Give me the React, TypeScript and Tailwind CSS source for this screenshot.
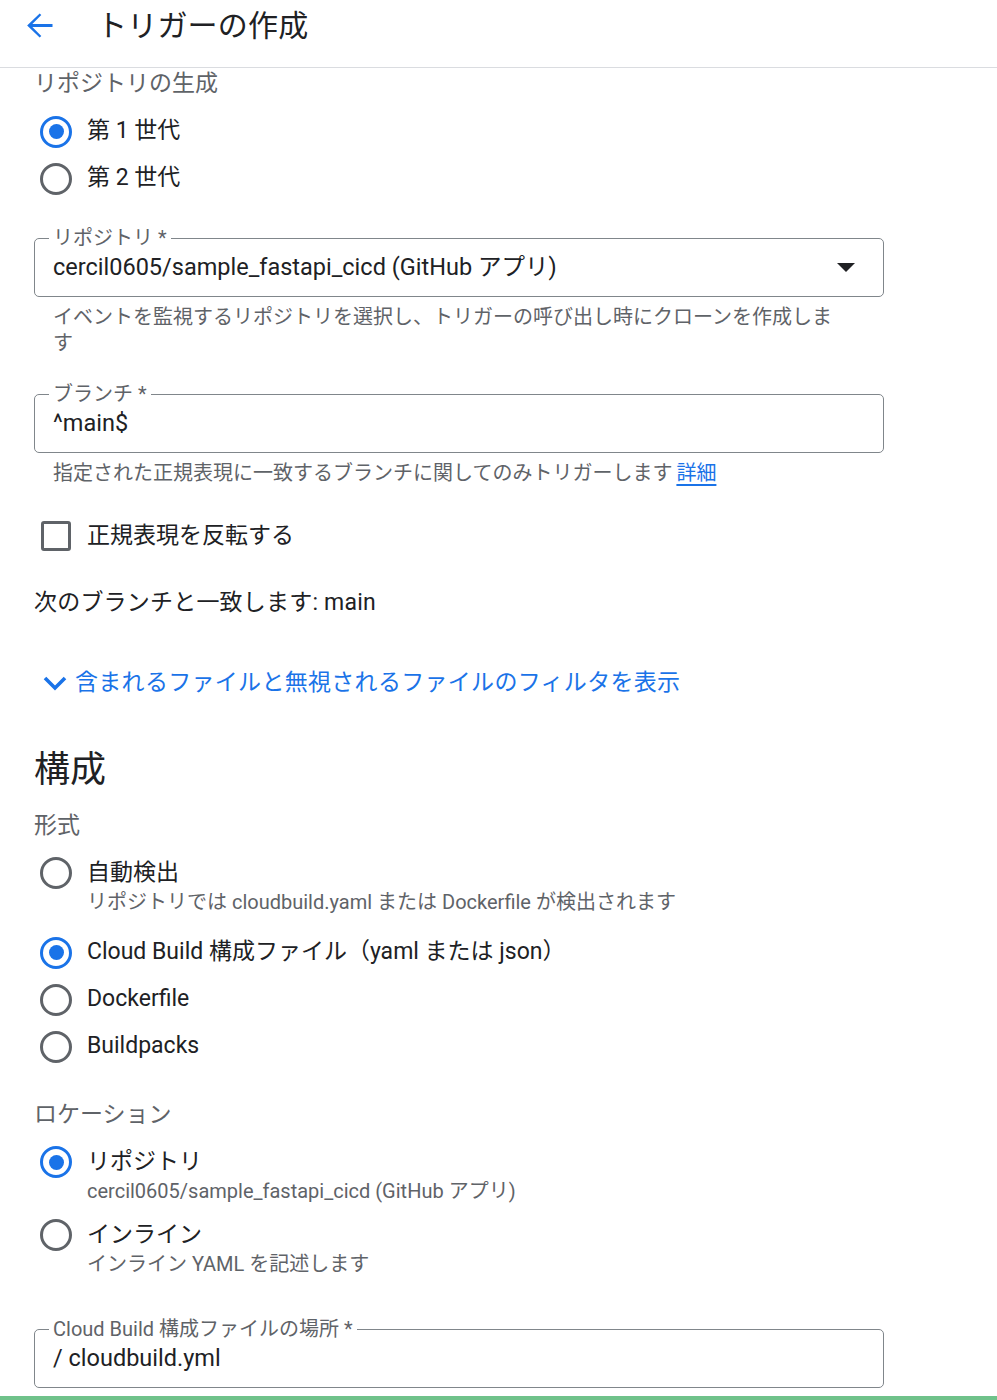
import type { ReactNode } from 'react';

const font = { fontFamily: 'Roboto, "Noto Sans CJK JP", sans-serif' };

function Radio({ checked }: { checked?: boolean }) {
  return (
    <span
      className={`flex h-[32px] w-[32px] shrink-0 items-center justify-center rounded-full border-[3.5px] ${
        checked ? 'border-[#1a73e8]' : 'border-[#5f6368]'
      }`}
    >
      {checked && <span className="h-[15px] w-[15px] rounded-full bg-[#1a73e8]" />}
    </span>
  );
}

function RadioRow({ label, checked }: { label: string; checked?: boolean }) {
  return (
    <div className="flex h-[47px] items-center pl-[6px]">
      <Radio checked={checked} />
      <span className="ml-[15px] text-[23px] text-[#202124]">{label}</span>
    </div>
  );
}

function RadioWithSub({ label, sub, checked }: { label: string; sub: string; checked?: boolean }) {
  return (
    <div className="pl-[6px]">
      <div className="flex h-[34px] items-center">
        <Radio checked={checked} />
        <span className="ml-[15px] text-[23px] leading-[34px] text-[#202124]">{label}</span>
      </div>
      <div className="pl-[47px] text-[20px] leading-[24px] text-[#5f6368]">{sub}</div>
    </div>
  );
}

function OutlinedField({ label, children }: { label: string; children: ReactNode }) {
  return (
    <div className="relative flex h-[59px] w-[850px] items-center rounded-[5px] border border-[#80868b] pl-[18px] pr-[28px]">
      <span className="absolute left-[14px] top-[-14px] bg-white px-[4px] text-[20px] leading-[26px] text-[#5f6368]">
        {label}
      </span>
      {children}
    </div>
  );
}

function SectionLabel({ children }: { children: ReactNode }) {
  return <div className="h-[28px] text-[23px] leading-[28px] text-[#5f6368]">{children}</div>;
}

export default function App() {
  return (
    <div className="min-h-[1400px] overflow-hidden bg-white" style={font}>
      {/* Header */}
      <div className="h-[68px] border-b border-[#dadce0]">
        <div className="flex h-[50px] items-center pl-[20px]">
          <svg width="39" height="39" viewBox="0 0 24 24" fill="#1a73e8">
            <path d="M20 11.1H7.6l5.5-5.5-1-1L4.4 12l7.7 7.4 1-1-5.5-5.5H20z" />
          </svg>
          <h1 className="ml-[38px] text-[30px] font-normal tracking-[0.2px] text-[#202124]">トリガーの作成</h1>
        </div>
      </div>

      <div className="pl-[34px] pt-[2px]">
        <SectionLabel>リポジトリの生成</SectionLabel>
        <div className="mt-[10px]">
          <RadioRow label="第 1 世代" checked />
          <RadioRow label="第 2 世代" />
        </div>

        {/* Repository */}
        <div className="mt-[36px]">
          <OutlinedField label="リポジトリ *">
            <span className="flex-1 text-[23.5px] text-[#202124]">cercil0605/sample_fastapi_cicd (GitHub アプリ)</span>
            <svg width="18" height="10" viewBox="0 0 18 10" fill="#202124">
              <path d="M0 0h18L9 9z" />
            </svg>
          </OutlinedField>
        </div>
        <div className="mt-[7px] w-[800px] pl-[19px] text-[20px] leading-[26px] text-[#5f6368]">
          イベントを監視するリポジトリを選択し、トリガーの呼び出し時にクローンを作成します
        </div>

        {/* Branch */}
        <div className="mt-[38px]">
          <OutlinedField label="ブランチ *">
            <span className="text-[23.5px] text-[#202124]">^main$</span>
          </OutlinedField>
        </div>
        <div className="mt-[7px] pl-[19px] text-[20px] leading-[26px] text-[#5f6368]">
          指定された正規表現に一致するブランチに関してのみトリガーします
          <a className="ml-[4px] text-[#1a73e8] underline underline-offset-[4px]">詳細</a>
        </div>

        <div className="mt-[30px] flex h-[40px] items-center pl-[7px]">
          <span className="h-[30px] w-[30px] rounded-[3px] border-[3.5px] border-[#5f6368]" />
          <span className="ml-[16px] text-[23px] text-[#202124]">正規表現を反転する</span>
        </div>

        <div className="mt-[33px] text-[23px] leading-[28px] tracking-[0.2px] text-[#202124]">次のブランチと一致します: main</div>

        <div className="mt-[51px] flex h-[30px] items-center text-[#1a73e8]">
          <svg className="ml-[9px]" width="24" height="16" viewBox="0 0 24 16" fill="none" stroke="#1a73e8" strokeWidth="3.6">
            <path d="M2 3l10 10L22 3" />
          </svg>
          <span className="ml-[8px] text-[23px] leading-[30px] tracking-[0.3px]">含まれるファイルと無視されるファイルのフィルタを表示</span>
        </div>

        {/* Config */}
        <h2 className="mt-[48px] h-[48px] text-[36px] font-normal leading-[48px] text-[#202124]">構成</h2>
        <div className="mt-[18px]">
          <SectionLabel>形式</SectionLabel>
        </div>
        <div className="mt-[16px]">
          <RadioWithSub label="自動検出" sub="リポジトリでは cloudbuild.yaml または Dockerfile が検出されます" />
        </div>
        <div className="mt-[15px]">
          <RadioRow label="Cloud Build 構成ファイル（yaml または json）" checked />
          <RadioRow label="Dockerfile" />
          <RadioRow label="Buildpacks" />
        </div>

        <div className="mt-[31px]">
          <SectionLabel>ロケーション</SectionLabel>
        </div>
        <div className="mt-[16px]">
          <RadioWithSub label="リポジトリ" sub="cercil0605/sample_fastapi_cicd (GitHub アプリ)" checked />
        </div>
        <div className="mt-[15px]">
          <RadioWithSub label="インライン" sub="インライン YAML を記述します" />
        </div>

        <div className="mt-[53px]">
          <OutlinedField label="Cloud Build 構成ファイルの場所 *">
            <span className="text-[23.5px] text-[#202124]">/ cloudbuild.yml</span>
          </OutlinedField>
        </div>
      </div>
      <div className="mt-[8px] h-[10px] bg-[#6fc28a]" />
    </div>
  );
}
